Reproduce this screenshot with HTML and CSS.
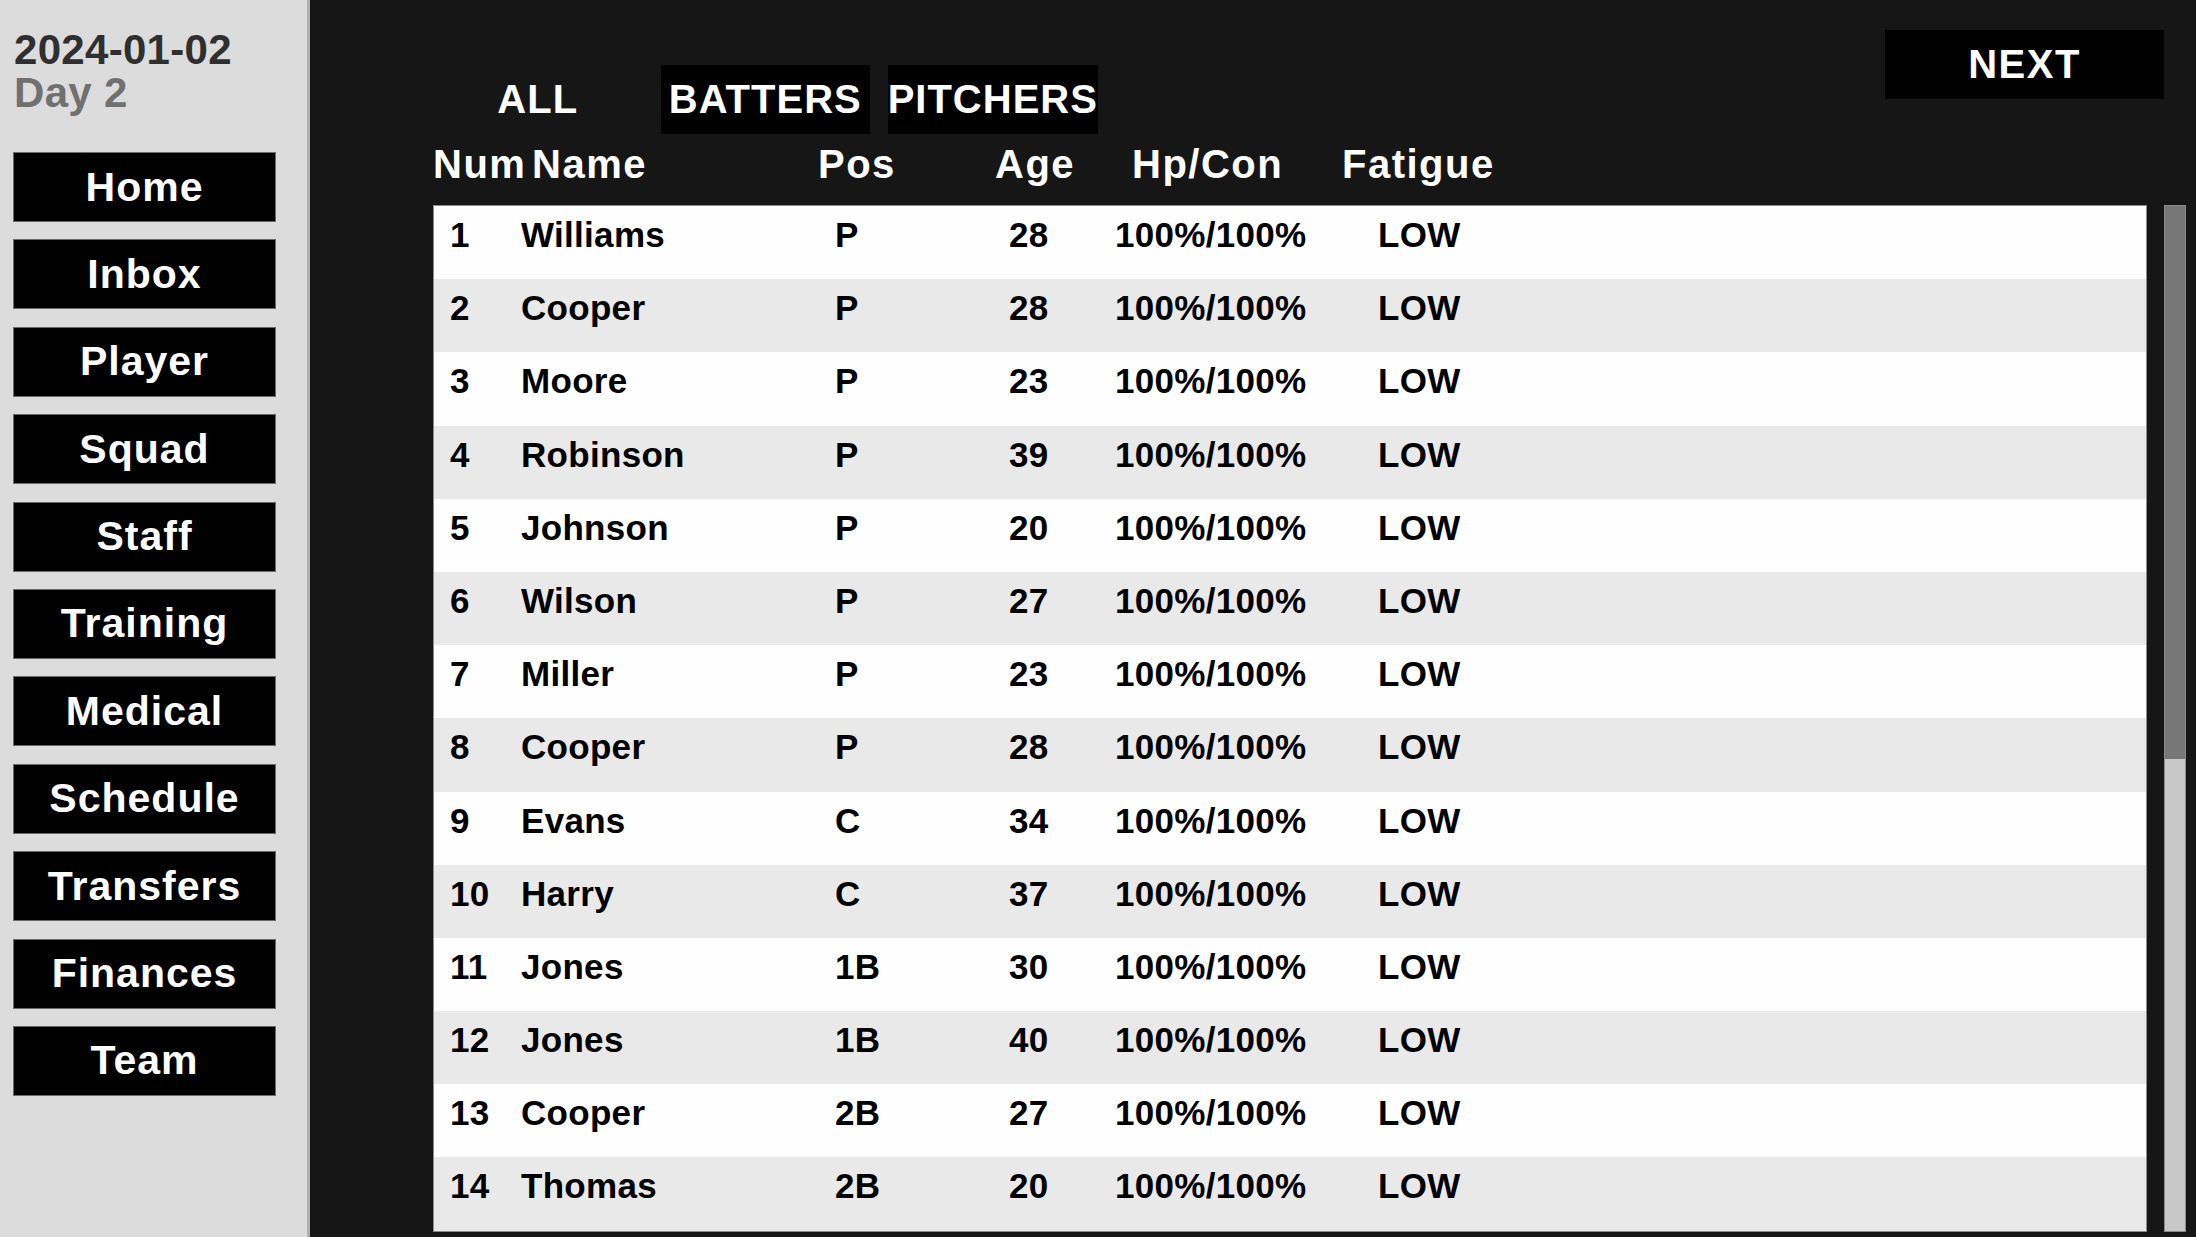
FILE: index.html
```html
<!DOCTYPE html>
<html lang="en">
<head>
<meta charset="utf-8">
<title>Squad</title>
<link rel="stylesheet" href="styles.css">
</head>
<body>
<div class="app">
  <aside class="sidebar">
    <div class="date">2024-01-02</div>
    <div class="day">Day 2</div>
    <nav class="nav">
      <div class="nav-btn">Home</div>
      <div class="nav-btn">Inbox</div>
      <div class="nav-btn">Player</div>
      <div class="nav-btn">Squad</div>
      <div class="nav-btn">Staff</div>
      <div class="nav-btn">Training</div>
      <div class="nav-btn">Medical</div>
      <div class="nav-btn">Schedule</div>
      <div class="nav-btn">Transfers</div>
      <div class="nav-btn">Finances</div>
      <div class="nav-btn">Team</div>
    </nav>
  </aside>
  <main class="main">
    <div class="topbar">
      <div class="tabs">
        <div class="tab tab-active">ALL</div>
        <div class="tab">BATTERS</div>
        <div class="tab">PITCHERS</div>
      </div>
      <div class="next-btn">NEXT</div>
    </div>
    <div class="thead">
      <div>Num</div><div>Name</div><div>Pos</div><div>Age</div><div>Hp/Con</div><div>Fatigue</div>
    </div>
    <div class="table-area">
      <div class="panel">
        <div class="row"><div>1</div><div>Williams</div><div>P</div><div>28</div><div>100%/100%</div><div>LOW</div></div>
        <div class="row"><div>2</div><div>Cooper</div><div>P</div><div>28</div><div>100%/100%</div><div>LOW</div></div>
        <div class="row"><div>3</div><div>Moore</div><div>P</div><div>23</div><div>100%/100%</div><div>LOW</div></div>
        <div class="row"><div>4</div><div>Robinson</div><div>P</div><div>39</div><div>100%/100%</div><div>LOW</div></div>
        <div class="row"><div>5</div><div>Johnson</div><div>P</div><div>20</div><div>100%/100%</div><div>LOW</div></div>
        <div class="row"><div>6</div><div>Wilson</div><div>P</div><div>27</div><div>100%/100%</div><div>LOW</div></div>
        <div class="row"><div>7</div><div>Miller</div><div>P</div><div>23</div><div>100%/100%</div><div>LOW</div></div>
        <div class="row"><div>8</div><div>Cooper</div><div>P</div><div>28</div><div>100%/100%</div><div>LOW</div></div>
        <div class="row"><div>9</div><div>Evans</div><div>C</div><div>34</div><div>100%/100%</div><div>LOW</div></div>
        <div class="row"><div>10</div><div>Harry</div><div>C</div><div>37</div><div>100%/100%</div><div>LOW</div></div>
        <div class="row"><div>11</div><div>Jones</div><div>1B</div><div>30</div><div>100%/100%</div><div>LOW</div></div>
        <div class="row"><div>12</div><div>Jones</div><div>1B</div><div>40</div><div>100%/100%</div><div>LOW</div></div>
        <div class="row"><div>13</div><div>Cooper</div><div>2B</div><div>27</div><div>100%/100%</div><div>LOW</div></div>
        <div class="row"><div>14</div><div>Thomas</div><div>2B</div><div>20</div><div>100%/100%</div><div>LOW</div></div>
      </div>
      <div class="scrollbar"><div class="thumb"></div></div>
    </div>
  </main>
</div>
</body>
</html>
```
FILE: styles.css
```css
* { box-sizing: border-box; }
html, body { margin: 0; padding: 0; }
body {
  width: 2196px;
  height: 1237px;
  overflow: hidden;
  font-family: "Liberation Sans", Arial, sans-serif;
  background: #161616;
}
.app {
  display: flex;
  height: 1237px;
}
.sidebar {
  width: 310px;
  flex: none;
  background: #dcdcdc;
  border-right: 3px solid #b0b0b0;
  padding: 28px 0 0 13px;
}
.date, .day {
  font-weight: bold;
  font-size: 42px;
  line-height: 43px;
  letter-spacing: 0.3px;
  margin-left: 1px;
}
.date { color: #2f2f2f; }
.day { color: #707070; }
.nav {
  margin-top: 38px;
  display: flex;
  flex-direction: column;
  gap: 17.4px;
}
.nav-btn {
  width: 263px;
  height: 70px;
  background: #000;
  border: 1px solid #6a6a6a;
  color: #fff;
  font-weight: bold;
  font-size: 41px;
  letter-spacing: 1px;
  display: flex;
  align-items: center;
  justify-content: center;
}
.main {
  flex: 1;
  display: flex;
  flex-direction: column;
  padding: 30px 10px 5px 123px;
}
.topbar {
  display: flex;
  justify-content: space-between;
  align-items: flex-start;
  height: 104px;
  flex: none;
}
.tabs {
  display: flex;
  gap: 18px;
  margin-top: 35px;
}
.tab {
  width: 209.5px;
  height: 69px;
  background: #000;
  color: #fff;
  font-weight: bold;
  font-size: 40px;
  letter-spacing: 1px;
  display: flex;
  align-items: center;
  justify-content: center;
  white-space: nowrap;
  overflow: visible;
}
.tab-active { background: transparent; }
.next-btn {
  width: 279px;
  height: 69px;
  margin-right: 22px;
  background: #000;
  color: #fff;
  font-weight: bold;
  font-size: 40px;
  letter-spacing: 1.5px;
  display: flex;
  align-items: center;
  justify-content: center;
}
.thead {
  flex: none;
  height: 71px;
  padding-top: 7px;
  display: grid;
  grid-template-columns: 99px 286px 177px 137px 210px 1fr;
  color: #fff;
  font-weight: bold;
  font-size: 40px;
  line-height: 46px;
  letter-spacing: 1.5px;
}
.row {
  height: 73.2px;
  padding: 9px 0 0 16px;
  display: grid;
  grid-template-columns: 71px 314px 174px 106px 263px 1fr;
  font-weight: bold;
  font-size: 35px;
  line-height: 40px;
  letter-spacing: 0.3px;
  color: #000;
  background: #fefefe;
}
.row:nth-child(even) { background: #e9e9e9; }
.table-area {
  flex: 1;
  display: flex;
  gap: 17px;
  min-height: 0;
}
.panel {
  width: 1714px;
  border: 1px solid #8a8a8a;
  overflow: hidden;
  background: #fff;
}
.scrollbar {
  width: 22px;
  background: #c8c8c8;
  border: 1px solid #8a8a8a;
  display: flex;
  flex-direction: column;
}
.thumb {
  height: 553px;
  background: #777;
}
```
